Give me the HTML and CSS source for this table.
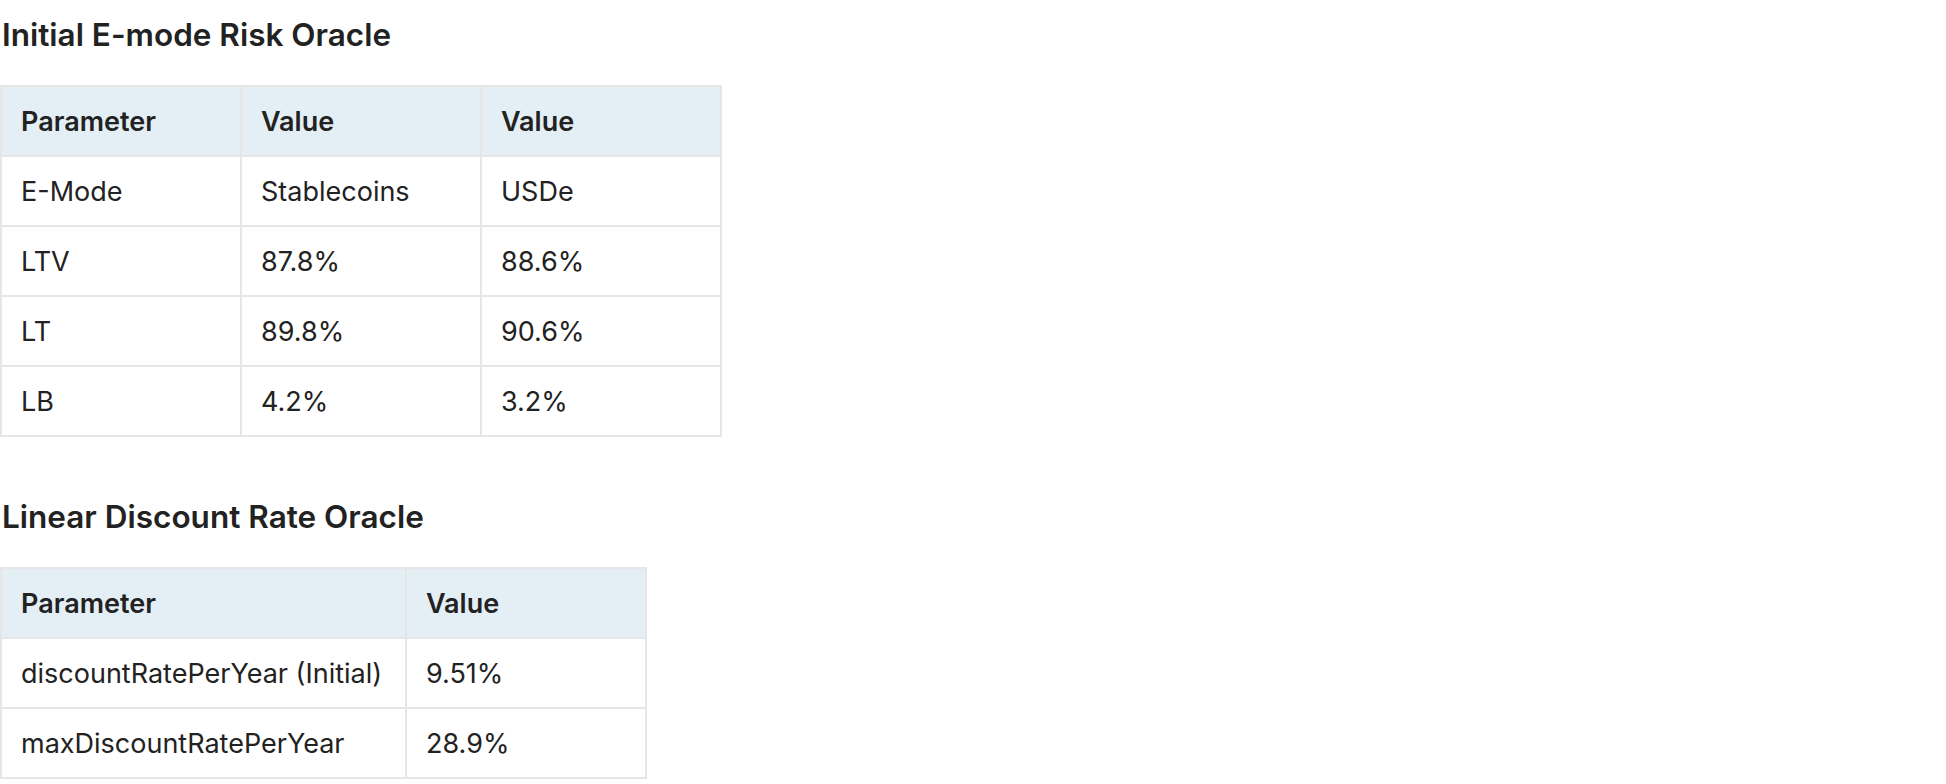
FILE: index.html
```html
<!DOCTYPE html>
<html>
<head>
<meta charset="utf-8">
<link rel="stylesheet" href="styles.css">
</head>
<body>
<div class="page">
  <h2 class="title">Initial E-mode Risk Oracle</h2>
  <table class="grid grid-emode">
    <thead>
      <tr><th>Parameter</th><th>Value</th><th>Value</th></tr>
    </thead>
    <tbody>
      <tr><td>E-Mode</td><td>Stablecoins</td><td>USDe</td></tr>
      <tr><td>LTV</td><td>87.8%</td><td>88.6%</td></tr>
      <tr><td>LT</td><td>89.8%</td><td>90.6%</td></tr>
      <tr><td>LB</td><td>4.2%</td><td>3.2%</td></tr>
    </tbody>
  </table>
  <h2 class="title">Linear Discount Rate Oracle</h2>
  <table class="grid grid-linear">
    <thead>
      <tr><th>Parameter</th><th>Value</th></tr>
    </thead>
    <tbody>
      <tr><td>discountRatePerYear (Initial)</td><td>9.51%</td></tr>
      <tr><td>maxDiscountRatePerYear</td><td>28.9%</td></tr>
    </tbody>
  </table>
</div>
</body>
</html>
```

FILE: styles.css
```css
html, body {
  margin: 0;
  padding: 0;
  background: #ffffff;
}

body {
  font-family: Inter, "Noto Sans", sans-serif;
  color: #222222;
}

.page {
  padding-top: 16px;
}

.title {
  font-size: 31.5px;
  font-weight: 600;
  line-height: 38px;
  margin: 0 0 31px 2px;
  color: #222222;
}

.grid {
  border-collapse: collapse;
  margin-bottom: 61px;
  font-size: 27px;
  table-layout: fixed;
}

.grid:last-child {
  margin-bottom: 0;
}

.grid th,
.grid td {
  border: 2px solid #e6e6e6;
  height: 70px;
  box-sizing: border-box;
  padding: 0 19px;
  text-align: left;
  vertical-align: middle;
  white-space: nowrap;
}

.grid th {
  background: #e3eff5;
  font-weight: 600;
}

.grid td {
  font-weight: 400;
}

.grid-emode th,
.grid-emode td {
  width: 240px;
}

.grid-linear th:first-child,
.grid-linear td:first-child {
  width: 405px;
}

.grid-linear th:last-child,
.grid-linear td:last-child {
  width: 240px;
}
```
